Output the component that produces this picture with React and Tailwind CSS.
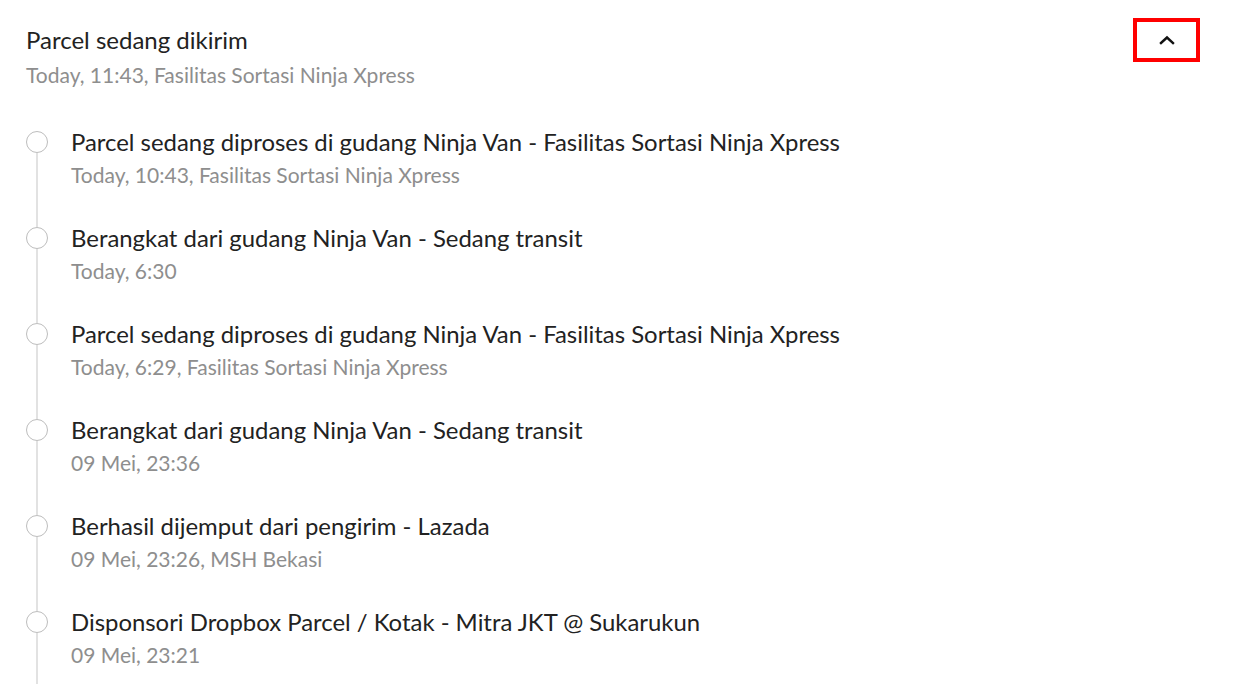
import React from "react";

const events = [
  { title: "Parcel sedang diproses di gudang Ninja Van - Fasilitas Sortasi Ninja Xpress", meta: "Today, 10:43, Fasilitas Sortasi Ninja Xpress" },
  { title: "Berangkat dari gudang Ninja Van - Sedang transit", meta: "Today, 6:30" },
  { title: "Parcel sedang diproses di gudang Ninja Van - Fasilitas Sortasi Ninja Xpress", meta: "Today, 6:29, Fasilitas Sortasi Ninja Xpress" },
  { title: "Berangkat dari gudang Ninja Van - Sedang transit", meta: "09 Mei, 23:36" },
  { title: "Berhasil dijemput dari pengirim - Lazada", meta: "09 Mei, 23:26, MSH Bekasi" },
  { title: "Disponsori Dropbox Parcel / Kotak - Mitra JKT @ Sukarukun", meta: "09 Mei, 23:21" },
];

const TimelineItem = ({ item, first }) => (
  <li className="flex">
    <div className="w-[45px] shrink-0 flex flex-col">
      <div className={`ml-[10px] w-[2px] h-[6px] ${first ? "bg-transparent" : "bg-[#e2e2e2]"}`} />
      <div className="w-[22px] h-[22px] rounded-full border border-[#bdbdbd] bg-white" />
      <div className="ml-[10px] w-[2px] flex-1 bg-[#e2e2e2]" />
    </div>
    <div className="pb-[30px]">
      <p className="text-[23.9px] leading-[34px] text-[#222222]">{item.title}</p>
      <p className="text-[21px] leading-[32px] text-[#8e8e8e]">{item.meta}</p>
    </div>
  </li>
);

export default function App() {
  return (
    <div className="min-h-screen bg-white overflow-hidden" style={{ fontFamily: "Lato, 'Open Sans', sans-serif" }}>
      <div className="pl-[26px] pr-[37px] pt-[23px]">
        <div className="flex items-start justify-between">
          <div>
            <h2 className="text-[24px] leading-[34px] text-[#222222]">Parcel sedang dikirim</h2>
            <p className="mt-[2px] text-[21px] leading-[32px] text-[#8e8e8e]">Today, 11:43, Fasilitas Sortasi Ninja Xpress</p>
          </div>
          <button className="mt-[-5px] w-[67px] h-[44px] border-4 border-[#ff0000] flex items-center justify-center">
            <svg width="16" height="10" viewBox="0 0 16 10" fill="none">
              <polyline points="2,8 8,2.5 14,8" stroke="#111" strokeWidth="2.4" strokeLinecap="square" />
            </svg>
          </button>
        </div>
        <ul className="mt-[34px]">
          {events.map((e, i) => (
            <TimelineItem key={i} item={e} first={i === 0} />
          ))}
        </ul>
      </div>
    </div>
  );
}
